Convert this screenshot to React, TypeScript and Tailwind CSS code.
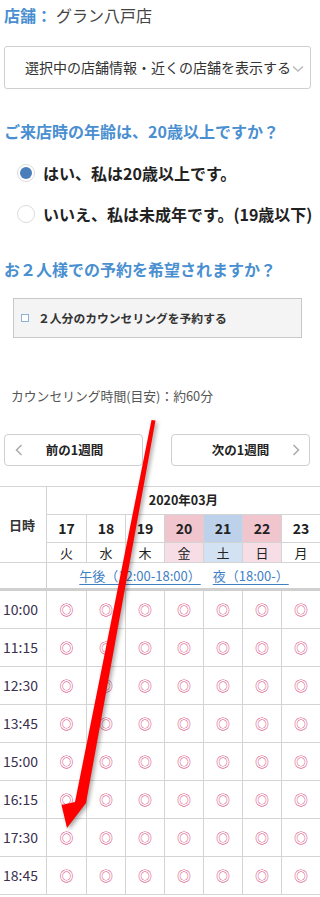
import React from "react";

const days = [
  { d: "17", w: "火", t: "" },
  { d: "18", w: "水", t: "" },
  { d: "19", w: "木", t: "" },
  { d: "20", w: "金", t: "pink" },
  { d: "21", w: "土", t: "blue" },
  { d: "22", w: "日", t: "pink" },
  { d: "23", w: "月", t: "" },
];

const times = ["10:00", "11:15", "12:30", "13:45", "15:00", "16:15", "17:30", "18:45"];

function dateBg(t: string) {
  if (t === "pink") return "bg-[#f1c5ce]";
  if (t === "blue") return "bg-[#bdd2ea]";
  return "bg-white";
}
function dayBg(t: string) {
  if (t === "pink") return "bg-[#f6dde6]";
  if (t === "blue") return "bg-[#d3e2f2]";
  return "bg-white";
}

export default function App() {
  return (
    <div
      className="relative w-[320px] h-[897px] overflow-hidden bg-white text-[#333]"
      style={{ fontFamily: '"Noto Sans CJK JP", "Noto Sans", sans-serif' }}
    >
      <div className="pl-[4px] pt-[5px] h-[46px] text-[16px] leading-[20px] whitespace-nowrap">
        <span className="font-bold text-[#4a8fd0]">店舗：</span>
        <span className="ml-[4px] text-[#444]">グラン八戸店</span>
      </div>

      <div className="ml-[4px] w-[307px] h-[43px] border border-[#cfcfcf] rounded-[3px] flex items-center pl-[20px] text-[14px] text-[#333] whitespace-nowrap overflow-hidden">
        <span>選択中の店舗情報・近くの店舗を表示する</span>
        <svg width="12" height="8" viewBox="0 0 12 8" className="ml-[1px] mt-[2px] shrink-0">
          <path d="M1 1.5 L6 6 L11 1.5" fill="none" stroke="#bbb" strokeWidth="1.6" />
        </svg>
      </div>

      <div className="mt-[32px] pl-[4px] h-[20px] text-[16px] leading-[20px] font-bold text-[#4a8fd0] whitespace-nowrap">
        ご来店時の年齢は、20歳以上ですか？
      </div>

      <div className="mt-[17px] h-[30px] flex items-center pl-[17px] whitespace-nowrap">
        <span className="w-[18px] h-[18px] rounded-full border border-[#dcdcdc] bg-white flex items-center justify-center shrink-0">
          <span className="w-[12px] h-[12px] rounded-full bg-[#4a7ebb]" />
        </span>
        <span className="ml-[8px] text-[16px] font-bold text-[#222]">はい、私は20歳以上です。</span>
      </div>
      <div className="mt-[11px] h-[30px] flex items-center pl-[17px] whitespace-nowrap">
        <span className="w-[18px] h-[18px] rounded-full border border-[#dcdcdc] bg-white shrink-0" />
        <span className="ml-[8px] text-[16px] font-bold text-[#222]">いいえ、私は未成年です。(19歳以下)</span>
      </div>

      <div className="mt-[30px] pl-[4px] h-[20px] text-[16px] leading-[20px] font-bold text-[#4a8fd0] whitespace-nowrap">
        お２人様での予約を希望されますか？
      </div>

      <div className="mt-[19px] ml-[13px] w-[289px] h-[40px] bg-[#f4f4f4] border border-[#c8c8c8] flex items-center pl-[7px] whitespace-nowrap">
        <span className="w-[8px] h-[8px] border border-[#8fb0d8] bg-white shrink-0" />
        <span className="ml-[9px] text-[11.8px] font-bold text-[#333]">２人分のカウンセリングを予約する</span>
      </div>

      <div className="mt-[49px] pl-[11px] h-[18px] text-[12.8px] leading-[18px] text-[#555] whitespace-nowrap">
        カウンセリング時間(目安)：約60分
      </div>

      <div className="mt-[29px] flex h-[32px]">
        <div className="ml-[4px] w-[139px] h-[32px] border border-[#cfcfcf] rounded-[4px] relative flex items-center justify-center">
          <svg width="8" height="12" viewBox="0 0 8 12" className="absolute left-[10px] top-[9px]">
            <path d="M6.5 1 L1.5 6 L6.5 11" fill="none" stroke="#aaa" strokeWidth="1.5" />
          </svg>
          <span className="text-[12.5px] font-bold text-[#222] pl-[2px]">前の1週間</span>
        </div>
        <div className="ml-[28px] w-[139px] h-[32px] border border-[#cfcfcf] rounded-[4px] relative flex items-center justify-center">
          <span className="text-[12.5px] font-bold text-[#222]">次の1週間</span>
          <svg width="8" height="12" viewBox="0 0 8 12" className="absolute right-[9px] top-[9px]">
            <path d="M1.5 1 L6.5 6 L1.5 11" fill="none" stroke="#aaa" strokeWidth="1.5" />
          </svg>
        </div>
      </div>

      <div className="mt-[20px] w-[320px] overflow-hidden">
        <div className="w-[321px] border-t border-[#d4d4d4] grid grid-cols-[47px_40px_39px_39px_39px_39px_39px_39px] grid-rows-[28px_28px_20px_28px]">
          <div className="row-span-3 border-r border-b border-[#d4d4d4] flex items-center justify-center text-[13px] font-bold text-[#333] pr-[2px]">
            日時
          </div>
          <div className="col-span-7 border-r border-b border-[#d4d4d4] flex items-center justify-center text-[12.5px] font-bold text-[#222]">
            2020年03月
          </div>
          {days.map((d) => (
            <div
              key={"d" + d.d}
              className={`border-r border-b border-[#d4d4d4] flex items-center justify-center text-[14px] font-bold text-[#222] ${dateBg(d.t)}`}
            >
              {d.d}
            </div>
          ))}
          {days.map((d) => (
            <div
              key={"w" + d.d}
              className={`border-r border-b border-[#d4d4d4] flex items-center justify-center text-[13px] text-[#222] ${dayBg(d.t)}`}
            >
              {d.w}
            </div>
          ))}
          <div className="border-r border-b-[3px] border-[#d0d0d0]" />
          <div className="col-span-7 border-b-[3px] border-[#d0d0d0] flex items-center justify-center gap-[12px] text-[13px] text-[#3f7fc4] whitespace-nowrap">
            <span className="underline underline-offset-[3px]">午後（12:00-18:00）</span>
            <span className="underline underline-offset-[3px]">夜（18:00-）</span>
          </div>
        </div>
        <div className="w-[321px] grid grid-cols-[47px_40px_39px_39px_39px_39px_39px_39px]">
          {times.map((t) => (
            <React.Fragment key={t}>
              <div className="h-[38px] border-r border-b border-[#d4d4d4] flex items-center pl-[3px] text-[14px] text-[#3a3050]">
                {t}
              </div>
              {days.map((d) => (
                <div
                  key={t + d.d}
                  className="h-[38px] border-r border-b border-[#d4d4d4] flex items-center justify-center text-[14px] text-[#d8437a]"
                >
                  ◎
                </div>
              ))}
            </React.Fragment>
          ))}
        </div>
      </div>

      <svg
        className="absolute left-0 top-0 pointer-events-none drop-shadow-[2px_2px_2px_rgba(0,0,0,0.35)]"
        width="320"
        height="897"
        viewBox="0 0 320 897"
      >
        <polygon
          points="151.5,420 155.5,420.5 86,803 67,828 61.5,805 75,802"
          fill="#ff0000"
        />
      </svg>
    </div>
  );
}
